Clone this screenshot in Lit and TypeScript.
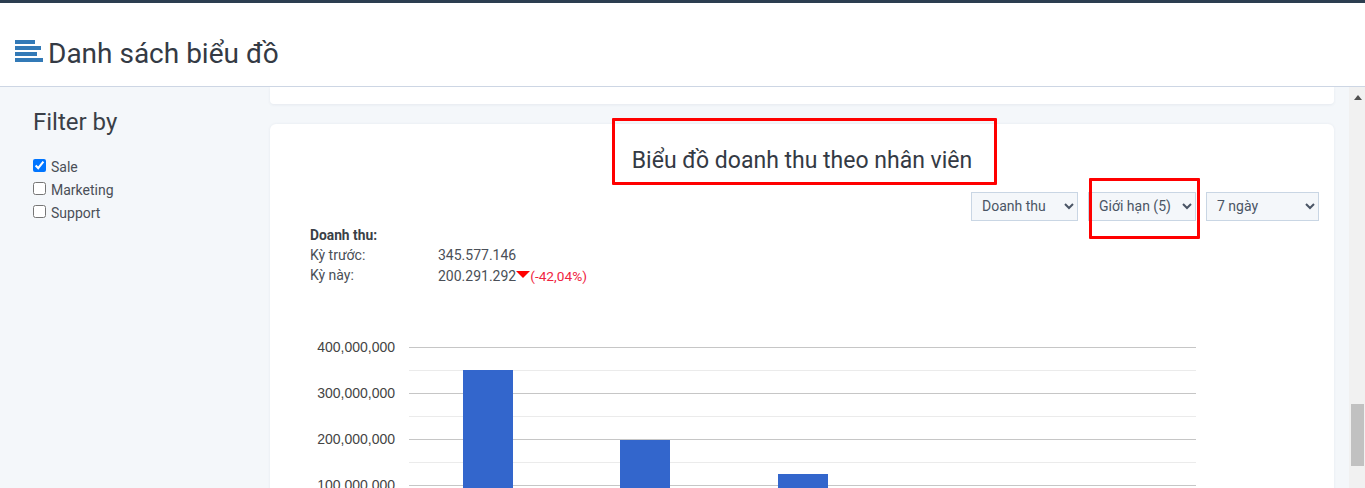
import { LitElement, html, css, svg } from "lit";
import { customElement } from "lit/decorators.js";

const majors = [
  { y: 347, label: "400,000,000" },
  { y: 393, label: "300,000,000" },
  { y: 439, label: "200,000,000" },
  { y: 485, label: "100,000,000" },
];
const minors = [370, 416, 462];
const bars = [
  { x: 463, y: 370 },
  { x: 620, y: 440 },
  { x: 778, y: 474 },
];
const OX = 270;
const OY = 320;

@customElement("app-root")
export class AppRoot extends LitElement {
  static styles = css`
    :host {
      display: block;
      position: relative;
      width: 1365px;
      height: 488px;
      overflow: hidden;
      background: #f4f7fa;
      font-family: Roboto, "Liberation Sans", sans-serif;
      color: #3a3f47;
    }
    .topbar { height: 3px; background: #2c3e50; }
    .header {
      height: 84px;
      box-sizing: border-box;
      background: #fff;
      border-bottom: 1px solid #cdd6e4;
      display: flex;
      align-items: center;
      gap: 5px;
      padding: 17px 0 0 15px;
    }
    .header svg { display: block; margin-top: -4px; }
    h1 { margin: 2px 0 0; font-size: 28px; font-weight: 400; line-height: 32px; color: #343a44; }
    .body { display: flex; height: 401px; overflow: hidden; }
    .sidebar { width: 270px; flex: none; box-sizing: border-box; padding: 20px 0 0 33px; }
    h2 { margin: 0 0 18px; font-size: 24px; font-weight: 400; line-height: 30px; color: #3a3f47; }
    .check {
      display: flex; align-items: center; gap: 5px;
      height: 23px; font-size: 14px; color: #4a4f57;
    }
    .check input { margin: 0 0 2px; width: 13px; height: 13px; }
    .main { flex: 1; min-width: 0; padding-right: 15px; }
    .card-top {
      height: 17px; background: #fff;
      border-radius: 0 0 4px 4px;
      box-shadow: 0 1px 3px rgba(60, 80, 110, 0.08);
    }
    .card {
      margin-top: 20px;
      height: 400px;
      background: #fff;
      border-radius: 6px 6px 0 0;
      box-shadow: 0 0 3px rgba(60, 80, 110, 0.08);
      position: relative;
    }
    h3 {
      margin: 0; padding-top: 22px;
      text-align: center; font-size: 23px; font-weight: 400; line-height: 30px; color: #343a44;
    }
    .filters { display: flex; justify-content: flex-end; gap: 10px; padding: 16px 15px 0 0; }
    select {
      height: 29px; box-sizing: border-box;
      background: #f4f7fa; border: 1px solid #c9d6e4; border-radius: 0;
      font: 14px Roboto, "Liberation Sans", sans-serif; color: #4a5565;
      padding: 0 6px 1px;
    }
    .s1 { width: 107px; }
    .s2 { width: 108px; }
    .s3 { width: 113px; }
    .stats { padding: 4px 0 0 40px; font-size: 14px; line-height: 20px; color: #4a4f57; }
    .row { display: flex; }
    .row span:first-child { width: 128px; }
    .bold { font-weight: 700; font-size: 13.8px; color: #3a3f47; line-height: 20px; }
    .val { padding-top: 1px; }
    .tri {
      display: inline-block; width: 0; height: 0;
      border-left: 7px solid transparent; border-right: 7px solid transparent;
      border-top: 7px solid #f00;
      vertical-align: 3px;
    }
    .delta { color: #f0243f; font-size: 13.7px; }
    .chart { position: absolute; left: 0; top: 196px; display: block; }
    .chart text { font: 14px "Liberation Sans", Arial, sans-serif; fill: #444; }
    .scroll { width: 16px; flex: none; background: #f1f1f1; box-sizing: border-box; padding: 8px 1px 0 2px; }
    .scroll .up {
      width: 0; height: 0; margin: 0 auto;
      border-left: 4px solid transparent; border-right: 4px solid transparent;
      border-bottom: 5px solid #505050;
    }
    .scroll .thumb { margin-top: 304px; height: 62px; background: #c1c1c1; }
    .mark { position: absolute; border: 3px solid #f00; box-sizing: border-box; border-radius: 1px; }
    .m1 { left: 612px; top: 118px; width: 385px; height: 67px; }
    .m2 { left: 1089px; top: 178px; width: 111px; height: 61px; }
  `;

  render() {
    return html`
      <div class="topbar"></div>
      <div class="header">
        <svg width="28" height="22" viewBox="0 0 28 22" fill="#337ab7">
          <rect x="0" y="0" width="20" height="4"></rect>
          <rect x="0" y="6" width="26" height="4"></rect>
          <rect x="0" y="12" width="22" height="4"></rect>
          <rect x="0" y="18" width="28" height="4"></rect>
        </svg>
        <h1>Danh sách biểu đồ</h1>
      </div>
      <div class="body">
        <aside class="sidebar">
          <h2>Filter by</h2>
          <label class="check"><input type="checkbox" checked />Sale</label>
          <label class="check"><input type="checkbox" />Marketing</label>
          <label class="check"><input type="checkbox" />Support</label>
        </aside>
        <main class="main">
          <div class="card-top"></div>
          <section class="card">
            <h3>Biểu đồ doanh thu theo nhân viên</h3>
            <div class="filters">
              <select class="s1"><option>Doanh thu</option></select>
              <select class="s2"><option>Giới hạn (5)</option></select>
              <select class="s3"><option>7 ngày</option></select>
            </div>
            <div class="stats">
              <div class="bold">Doanh thu:</div>
              <div class="row"><span>Kỳ trước:</span><span>345.577.146</span></div>
              <div class="row">
                <span>Kỳ này:</span>
                <span class="val">200.291.292<i class="tri"></i><span class="delta">(-42,04%)</span></span>
              </div>
            </div>
            <svg class="chart" width="1064" height="204" viewBox="${OX} ${OY} 1064 204">
              ${minors.map((y) => svg`<rect x="409" y="${y}" width="787" height="1" fill="#ebebeb"></rect>`)}
              ${majors.map(
                (m) => svg`
                  <rect x="409" y="${m.y}" width="787" height="1" fill="#c6c6c6"></rect>
                  <text x="395" y="${m.y + 5}" text-anchor="end">${m.label}</text>`
              )}
              ${bars.map((b) => svg`<rect x="${b.x}" y="${b.y}" width="50" height="${524 - b.y}" fill="#3366cc"></rect>`)}
            </svg>
          </section>
        </main>
        <div class="scroll"><div class="up"></div><div class="thumb"></div></div>
      </div>
      <div class="mark m1"></div>
      <div class="mark m2"></div>
    `;
  }
}
